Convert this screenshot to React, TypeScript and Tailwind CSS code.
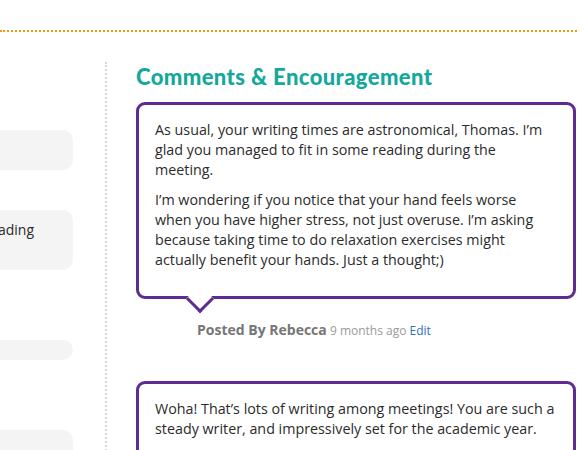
import {ReactNode} from "react";

interface Comment {
    id: number,
    paragraphs: string[],
    author: string,
    ago: string
}

const comments: Comment[] = [
    {
        id: 1,
        paragraphs: [
            "As usual, your writing times are astronomical, Thomas. I\u2019m glad you managed to fit in some reading during the meeting.",
            "I\u2019m wondering if you notice that your hand feels worse when you have higher stress, not just overuse. I\u2019m asking because taking time to do relaxation exercises might actually benefit your hands. Just a thought;)"
        ],
        author: "Rebecca",
        ago: "9 months ago"
    },
    {
        id: 2,
        paragraphs: [
            "Woha! That\u2019s lots of writing among meetings! You are such a steady writer, and impressively set for the academic year.",
            "Keep up the good work, and remember to take breaks for your hands."
        ],
        author: "Rebecca",
        ago: "9 months ago"
    }
];

function EntryBox({className, children}: { className: string, children?: ReactNode }) {
    return (
        <div className={`bg-[#f4f4f4] rounded-[10px] ${className}`}>
            {children}
        </div>
    )
}

function Bubble(comment: Comment) {
    return (
        <div className="mb-[41px]">
            <div className="relative bg-white border-[3px] border-[#5e2b92] rounded-[9px] pt-[15px] pb-[26px] pl-4 pr-[17.5px]">
                <div className="flex flex-col gap-[10px] text-[14.3px] leading-[20px] text-[#2b2b2b]">
                    {comment.paragraphs.map((p, i) => <p key={i}>{p}</p>)}
                </div>
                <div
                    className="absolute left-[51px] -bottom-[13px] w-[20px] h-[20px] bg-white border-r-[3px] border-b-[3px] border-[#5e2b92] rotate-45"/>
            </div>
            <div className="mt-[21px] pl-[61px] leading-[18px]">
                <span className="text-[14px] font-bold text-[#767676]">Posted By {comment.author}</span>
                <span className="text-[12px] text-[#9a9a9a]"> {comment.ago} </span>
                <a className="text-[12px] text-[#2d6fc0]" href="#">Edit</a>
            </div>
        </div>
    )
}

export default function App() {
    return (
        <div className="w-[587px] h-[450px] overflow-hidden bg-white font-['Open_Sans',sans-serif]">
            <div className="pt-[30px]">
                <div className="w-[577px] border-t-2 border-dotted border-[#f39a12]"/>
            </div>
            <div className="flex mt-[30px]">
                <div className="ml-[-200px] w-[273px] shrink-0 pt-[68px]">
                    <EntryBox className="h-[40px]"/>
                    <EntryBox className="h-[60px] mt-[40px] pt-[10px] pr-[39px] text-right text-[14px] leading-[20px] text-[#2b2b2b]">
                        reading
                    </EntryBox>
                    <EntryBox className="h-[20px] mt-[70px]"/>
                    <EntryBox className="h-[40px] mt-[70px]"/>
                </div>
                <div className="ml-[32px] w-0 border-l-2 border-dotted border-[#d6d6d6] h-[400px]"/>
                <div className="ml-[29px] w-[440px] shrink-0">
                    <h2 className="font-['Lato',sans-serif] font-black text-[22px] leading-[26px] text-[#14a89c] mt-[2px] tracking-[0.4px]">
                        Comments &amp; Encouragement
                    </h2>
                    <div className="mt-[12px]">
                        {comments.map(c => <Bubble key={c.id} {...c}/>)}
                    </div>
                </div>
            </div>
        </div>
    )
}
